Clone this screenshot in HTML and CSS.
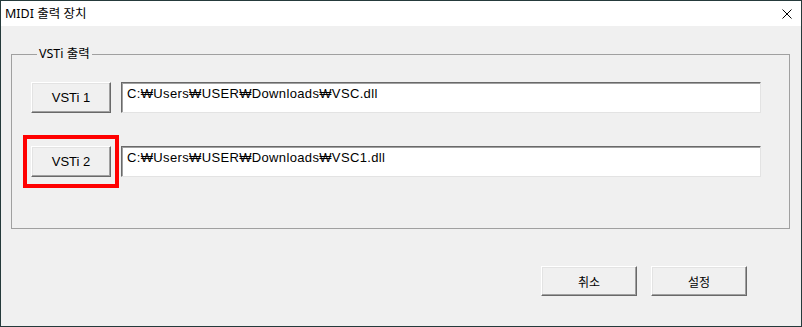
FILE: index.html
```html
<!DOCTYPE html>
<html lang="ko">

<head>
    <meta charset="UTF-8" />
    <title>MIDI 출력 장치</title>
    <link rel="stylesheet" href="styles.css">
</head>

<body>
    <div class="window">
        <div class="title-bar">
            <span class="title">MIDI 출력 장치</span>
            <svg class="close" width="10" height="10" viewBox="0 0 10 10">
                <path d="M0.5 0.5 L9.5 9.5 M9.5 0.5 L0.5 9.5" stroke="#000" stroke-width="1" fill="none" />
            </svg>
        </div>
        <div class="content">
            <fieldset class="group">
                <legend>VSTi 출력</legend>
                <div class="row">
                    <div class="btn-cell">
                        <button class="btn vsti">VSTi 1</button>
                    </div>
                    <div class="path-box">C:₩Users₩USER₩Downloads₩VSC.dll</div>
                </div>
                <div class="row">
                    <div class="btn-cell marked">
                        <button class="btn vsti">VSTi 2</button>
                    </div>
                    <div class="path-box">C:₩Users₩USER₩Downloads₩VSC1.dll</div>
                </div>
            </fieldset>
            <div class="actions">
                <button class="btn action">취소</button>
                <button class="btn action">설정</button>
            </div>
        </div>
    </div>
</body>

</html>
```

FILE: styles.css
```css
* {
    margin: 0;
    padding: 0;
    box-sizing: border-box;
}

body {
    background-color: #f0f0f0;
    font-family: "Liberation Sans", "Noto Sans CJK KR", sans-serif;
    color: #000;
}

.window {
    width: 802px;
    height: 327px;
    border: 1px solid #253a3b;
    background-color: #f0f0f0;
    display: flex;
    flex-direction: column;
}

.title-bar {
    height: 25px;
    background-color: #fff;
    display: flex;
    align-items: center;
    justify-content: space-between;
    padding: 0 9px 0 4px;
}

.title {
    font-family: "Noto Sans", "Noto Sans CJK KR", sans-serif;
    font-size: 12.5px;
    line-height: 16px;
}

.close {
    display: block;
    margin-top: 1px;
}

.content {
    flex: 1;
    display: flex;
    flex-direction: column;
}

.group {
    margin: 20px 11px 0 10px;
    padding: 20px 28px 51px 19px;
    border: 1px solid #a0a0a0;
    min-inline-size: 0;
}

.group legend {
    margin-left: 6px;
    padding: 0 2px;
    font-family: "Noto Sans", "Noto Sans CJK KR", sans-serif;
    font-size: 12.5px;
    line-height: 16px;
}

.row {
    display: flex;
    gap: 10px;
}

.row + .row {
    margin-top: 33px;
}

.btn-cell {
    position: relative;
}

.marked::after {
    content: "";
    position: absolute;
    left: -8px;
    right: -8px;
    top: -11px;
    bottom: -11px;
    border: 4px solid #f00;
}

.btn {
    background-color: #f0f0f0;
    border: 1px solid;
    border-color: #fff #696969 #696969 #fff;
    box-shadow: inset -1px -1px #a0a0a0, inset 1px 1px #e3e3e3;
    color: #000;
    cursor: pointer;
}

.vsti {
    width: 80px;
    height: 31px;
    font-family: "Liberation Sans", sans-serif;
    font-size: 13px;
}

.path-box {
    flex: 1;
    height: 31px;
    background-color: #fff;
    border: 1px solid;
    border-color: #696969 #e3e3e3 #e3e3e3 #696969;
    box-shadow: inset 1px 1px #a0a0a0;
    padding: 3px 5px;
    font-size: 13px;
    line-height: 15px;
    letter-spacing: 0.35px;
    white-space: nowrap;
}

.actions {
    display: flex;
    justify-content: flex-end;
    gap: 14px;
    margin-top: 37px;
    padding-right: 54px;
}

.action {
    width: 96px;
    height: 30px;
    font-family: "Noto Sans CJK KR", sans-serif;
    font-size: 12px;
}
```
